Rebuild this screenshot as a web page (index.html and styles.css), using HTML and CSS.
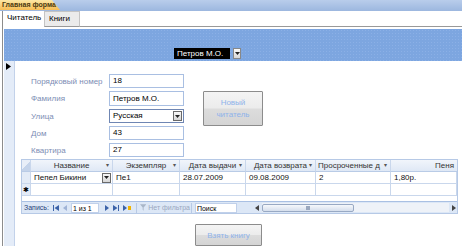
FILE: index.html
```html
<!DOCTYPE html>
<html lang="ru">
  <head>
    <meta charset="UTF-8" />
    <title>Главная форма</title>
    <link rel="stylesheet" href="styles.css">
  </head>
  <body>
    <div class="doc-bar">
      <div class="doc-tab">Главная форма</div>
    </div>

    <div class="frame">
      <!-- вкладки -->
      <div class="tabs">
        <div class="tab active">Читатель</div>
        <div class="tab">Книги</div>
        <div class="tabs-rest"></div>
      </div>

      <!-- заголовок формы -->
      <div class="form-header">
        <div class="combo-dark">
          <span class="combo-text">Петров М.О.</span>
          <span class="combo-btn"><svg width="5" height="3" viewBox="0 0 5 3"><path d="M0 0h5L2.5 3z" fill="#222"/></svg></span>
        </div>
      </div>

      <div class="form">
        <div class="selector">
          <svg class="marker" width="5" height="7" viewBox="0 0 5 7"><path d="M0 0l5 3.5L0 7z" fill="#000"/></svg>
        </div>

        <div class="form-body">
          <div class="top">
            <div class="fields">
              <span class="label">Порядковый номер</span>
              <div class="box">18</div>
              <span class="label">Фамилия</span>
              <div class="box tall">Петров М.О.</div>
              <span class="label">Улица</span>
              <div class="box combo">Русская<span class="drop"><svg width="5" height="3" viewBox="0 0 5 3"><path d="M0 0h5L2.5 3z" fill="#222"/></svg></span></div>
              <span class="label">Дом</span>
              <div class="box">43</div>
              <span class="label">Квартира</span>
              <div class="box">27</div>
            </div>
            <button class="btn btn-new">Новый<br>читатель</button>
          </div>

          <!-- таблица выдачи -->
          <div class="sheet">
            <div class="grid">
              <div class="hd corner"></div>
              <div class="hd">Название<i>▾</i></div>
              <div class="hd">Экземпляр<i>▾</i></div>
              <div class="hd">Дата выдачи<i>▾</i></div>
              <div class="hd">Дата возврата<i>▾</i></div>
              <div class="hd left">Просроченные д<i>▾</i></div>
              <div class="hd right">Пеня</div>

              <div class="sel"></div>
              <div class="cell">Пепел Бикини<span class="drop"><svg width="5" height="3" viewBox="0 0 5 3"><path d="M0 0h5L2.5 3z" fill="#222"/></svg></span></div>
              <div class="cell">Пе1</div>
              <div class="cell">28.07.2009</div>
              <div class="cell">09.08.2009</div>
              <div class="cell">2</div>
              <div class="cell">1,80р.</div>

              <div class="sel star">✱</div>
              <div class="cell"></div>
              <div class="cell"></div>
              <div class="cell"></div>
              <div class="cell"></div>
              <div class="cell"></div>
              <div class="cell"></div>
            </div>
            <div class="sheet-space"></div>

            <div class="nav">
              <span class="nav-label">Запись:</span>
              <svg class="nav-ico" width="6" height="6" viewBox="0 0 6 6"><path d="M0 0h1v6H0zM6 0v6L1.5 3z" fill="#3b62a8"/></svg>
              <svg class="nav-ico dim" width="4" height="6" viewBox="0 0 4 6"><path d="M4 0v6L0 3z" fill="#9fb3d6"/></svg>
              <div class="nav-box">1 из 1</div>
              <svg class="nav-ico" width="4" height="6" viewBox="0 0 4 6"><path d="M0 0v6l4-3z" fill="#3b62a8"/></svg>
              <svg class="nav-ico" width="6" height="6" viewBox="0 0 6 6"><path d="M0 0v6l4.5-3zM5 0h1v6H5z" fill="#3b62a8"/></svg>
              <svg class="nav-ico" width="8" height="6" viewBox="0 0 8 6"><path d="M0 0v6l4-3z" fill="#3b62a8"/><path d="M5 1h3v4H5z" fill="#f0b400"/></svg>
              <span class="nav-sep"></span>
              <span class="nav-filter"><svg width="7" height="7" viewBox="0 0 7 7"><path d="M0 0h7L4 3.5V7L3 6V3.5z" fill="#a9b6c8"/></svg>Нет фильтра</span>
              <span class="nav-sep"></span>
              <div class="nav-search">Поиск</div>
              <div class="hscroll">
                <svg width="4" height="6" viewBox="0 0 4 6"><path d="M4 0v6L0 3z" fill="#444"/></svg>
                <div class="track">
                  <div class="thumb"><span class="grip"></span></div>
                </div>
                <svg width="4" height="6" viewBox="0 0 4 6"><path d="M0 0v6l4-3z" fill="#444"/></svg>
              </div>
            </div>
          </div>

          <button class="btn btn-take">Взять книгу</button>
        </div>
      </div>
    </div>
  </body>
</html>
```

FILE: styles.css
```css
:root {
  --blue: #7da6e0;
  --label: #7d8db4;
  --field-border: #a9bfe2;
  --grid-line: #c9d7ec;
  --nav-bg: #dce7f6;
}

body {
  margin: 0;
  width: 462px;
  height: 246px;
  overflow: hidden;
  font-family: "Liberation Sans", Arial, sans-serif;
  font-size: 8px;
  color: #000;
  background: #fff;
}

/* полоса документов */
.doc-bar {
  height: 11px;
  background: linear-gradient(#b9cdeb, #9cb7df);
  display: flex;
}
.doc-tab {
  width: 58px;
  height: 10px;
  padding-left: 2px;
  line-height: 10px;
  font-size: 7px;
  font-weight: bold;
  color: #4a3a10;
  background: linear-gradient(#fde7a4, #f6bd55);
  clip-path: polygon(0 0, 52px 0, 60px 10px, 0 10px);
}

.frame {
  border-left: 1px solid #8c8c8c;
  margin-left: 2px;
  height: 235px;
  display: flex;
  flex-direction: column;
}

/* вкладки */
.tabs {
  height: 16px;
  display: flex;
  align-items: flex-end;
  padding-left: 2px;
  margin-bottom: 2px;
}
.tab {
  height: 14px;
  line-height: 14px;
  padding: 0 4px;
  font-size: 8px;
  border-bottom: 1px solid #999;
}
.tab.active {
  width: 33px;
  height: 16px;
  line-height: 15px;
  border-bottom-color: #fff;
  padding-left: 2px;
}
.tab:not(.active) {
  width: 26px;
  background: #ebebeb;
  border: 1px solid #c4c4c4;
  border-bottom-color: #999;
}
.tabs-rest {
  flex: 1;
  border-bottom: 1px solid #999;
}

/* заголовок формы */
.form-header {
  height: 33px;
  background-color: var(--blue);
  background-image: radial-gradient(#8bb0e6 0.5px, transparent 0.6px);
  background-size: 3px 3px;
  display: flex;
  align-items: flex-start;
  padding: 19px 0 0 170px;
  box-sizing: border-box;
  margin-left: 1px;
}
.combo-dark {
  display: flex;
  height: 11px;
}
.combo-text {
  width: 53px;
  background: #000;
  color: #fff;
  line-height: 11px;
  padding-left: 3px;
}
.combo-btn {
  width: 8px;
  height: 11px;
  margin-left: 3px;
  background: linear-gradient(#fafafa, #d8d8d8);
  border: 1px solid #888;
  box-sizing: border-box;
  display: flex;
  align-items: center;
  justify-content: center;
}

.form {
  flex: 1;
  display: flex;
}
.selector {
  width: 10px;
  margin-left: 1px;
  background: #e4ecf8;
  border-right: 1px solid #c3d2ea;
}
.marker {
  display: block;
  margin: 2px 0 0 2px;
}

.form-body {
  flex: 1;
  padding-top: 13px;
}

.top {
  display: flex;
  align-items: flex-start;
}
.fields {
  display: grid;
  grid-template-columns: 78px 75px;
  grid-template-rows: 14px 15px 14px 14px 14px;
  row-gap: 3px;
  margin-left: 16px;
  align-items: center;
}
.label {
  color: var(--label);
  font-size: 8px;
}
.box {
  height: 100%;
  border: 1px solid var(--field-border);
  box-sizing: border-box;
  padding-left: 3px;
  line-height: 12px;
  display: flex;
  align-items: center;
}
.box.combo {
  justify-content: space-between;
  padding-right: 1px;
  border-color: #6f86b3;
}
.drop {
  width: 9px;
  height: 10px;
  background: linear-gradient(#f8f8f8, #d6d6d6);
  border: 1px solid #6a6a6a;
  box-sizing: border-box;
  display: flex;
  align-items: center;
  justify-content: center;
}

.btn {
  font-family: "Liberation Sans", Arial, sans-serif;
  font-size: 8px;
  color: #8fb3ea;
  border: 1px solid #8c8c8c;
  border-radius: 1px;
  background: linear-gradient(#f4f4f4 0%, #ececec 48%, #dcdcdc 52%, #d4d4d4 100%);
  padding: 0;
}
.btn-new {
  width: 60px;
  height: 35px;
  margin: 17px 0 0 19px;
  line-height: 12px;
}
.btn-take {
  display: block;
  width: 67px;
  height: 22px;
  margin: 10px 0 0 180px;
}

/* таблица */
.sheet {
  margin: 2px 0 0 6px;
  width: 437px;
  border: 1px solid #b6c9e6;
  box-sizing: border-box;
}
.grid {
  display: grid;
  grid-template-columns: 9px 82px 67px 66px 70px 75px 66px;
  grid-template-rows: 12px 12px 12px;
}
.hd {
  background: linear-gradient(#f1f5fb, #dfe8f5);
  border-right: 1px solid var(--grid-line);
  border-bottom: 1px solid #b9cbe6;
  color: #333;
  display: flex;
  align-items: center;
  justify-content: center;
  position: relative;
  line-height: 11px;
  font-size: 8px;
}
.hd i {
  position: absolute;
  right: 3px;
  top: 0;
  font-style: normal;
  font-size: 6px;
  color: #555;
}
.hd.left {
  justify-content: flex-start;
  padding-left: 2px;
}
.hd.right {
  justify-content: flex-end;
  padding-right: 3px;
  border-right: none;
}
.hd.corner {
  background: linear-gradient(135deg, #e8eef8 50%, #c4d3ea 50%);
}
.sel {
  background: #e3ebf7;
  border-right: 1px solid var(--grid-line);
  border-bottom: 1px solid var(--grid-line);
}
.sel.star {
  font-size: 7px;
  line-height: 11px;
  text-align: center;
}
.cell {
  border-right: 1px solid var(--grid-line);
  border-bottom: 1px solid var(--grid-line);
  padding-left: 3px;
  line-height: 11px;
  display: flex;
  align-items: center;
  justify-content: space-between;
  padding-right: 1px;
  color: #111;
}
.sheet-space {
  height: 5px;
}

/* навигация */
.nav {
  height: 11px;
  background: var(--nav-bg);
  border-top: 1px solid #a9c0e3;
  display: flex;
  align-items: center;
  font-size: 7px;
  color: #1f3f78;
  white-space: nowrap;
}
.nav-label {
  margin: 0 4px 0 2px;
}
.nav-ico {
  margin-right: 4px;
  flex-shrink: 0;
}
.nav-box {
  width: 28px;
  height: 10px;
  background: #fff;
  border: 1px solid #c0d0ea;
  box-sizing: border-box;
  line-height: 9px;
  color: #000;
  padding-left: 1px;
  margin-right: 6px;
}
.nav-sep {
  width: 1px;
  height: 10px;
  background: #b7c9e5;
  margin: 0 3px 0 1px;
}
.nav-filter {
  color: #9aa8bf;
  display: flex;
  align-items: center;
  gap: 2px;
  width: 50px;
  flex-shrink: 0;
}
.nav-search {
  width: 42px;
  height: 10px;
  background: #fff;
  border: 1px solid #c0d0ea;
  box-sizing: border-box;
  line-height: 9px;
  color: #000;
  padding-left: 1px;
  margin-right: 18px;
  flex-shrink: 0;
}
.hscroll {
  flex: 1;
  display: flex;
  align-items: center;
  gap: 3px;
  padding-right: 1px;
}
.track {
  flex: 1;
  height: 9px;
  background: #eef2f8;
  display: flex;
  align-items: center;
}
.thumb {
  width: 92px;
  height: 8px;
  border: 1px solid #98a9c4;
  border-radius: 2px;
  box-sizing: border-box;
  background: linear-gradient(#f6f8fb, #d5deec);
  display: flex;
  justify-content: center;
  align-items: center;
}
.grip {
  width: 4px;
  height: 4px;
  background: #9aa8bf;
}
```
